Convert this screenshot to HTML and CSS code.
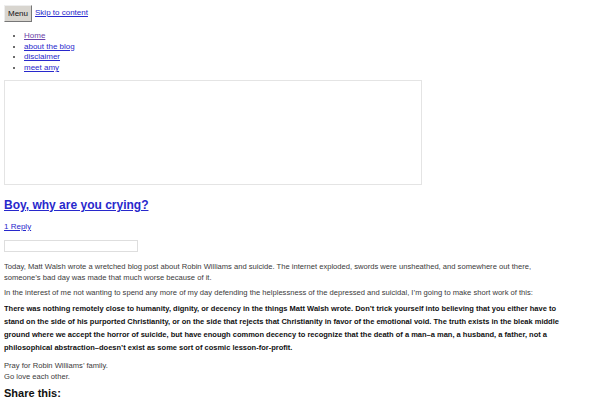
FILE: index.html
```html
<!DOCTYPE html>
<html lang="en">
<head>
    <meta charset="UTF-8">
    <meta name="viewport" content="width=device-width, initial-scale=1.0">
    <title>Boy, why are you crying?</title>
    <link rel="stylesheet" href="styles.css">
</head>
<body>
    <header class="site-header">
        <div class="header-bar">
            <button class="menu-toggle">Menu</button>
            <a href="#content" class="skip-link">Skip to content</a>
        </div>
        <ul class="nav-menu">
            <li><a href="#" class="visited">Home</a></li>
            <li><a href="#">about the blog</a></li>
            <li><a href="#">disclaimer</a></li>
            <li><a href="#">meet amy</a></li>
        </ul>
    </header>

    <div class="header-image"></div>

    <article class="post" id="content">
        <h1 class="entry-title"><a href="#">Boy, why are you crying?</a></h1>
        <div class="comments-link"><a href="#">1 Reply</a></div>
        <div class="meta-box"></div>

        <div class="entry-content">
            <p>Today, Matt Walsh wrote a wretched blog post about Robin Williams and suicide. The internet exploded, swords were unsheathed, and somewhere out there, someone’s bad day was made that much worse because of it.</p>
            <p>In the interest of me not wanting to spend any more of my day defending the helplessness of the depressed and suicidal, I’m going to make short work of this:</p>
            <p class="strong">There was nothing remotely close to humanity, dignity, or decency in the things Matt Walsh wrote. Don’t trick yourself into believing that you either have to stand on the side of his purported Christianity, or on the side that rejects that Christianity in favor of the emotional void. The truth exists in the bleak middle ground where we accept the horror of suicide, but have enough common decency to recognize that the death of a man–a man, a husband, a father, not a philosophical abstraction–doesn’t exist as some sort of cosmic lesson-for-profit.</p>
            <p>Pray for Robin Williams’ family.<br>Go love each other.</p>
        </div>

        <h3 class="share-title">Share this:</h3>
    </article>
</body>
</html>
```

FILE: styles.css
```css
* {
    box-sizing: border-box;
}

body {
    margin: 5px 4px 0;
    font-family: 'Liberation Sans', Arial, sans-serif;
    font-size: 8px;
    line-height: 10.67px;
    color: #3a3a3a;
    background: #fff;
}

a {
    color: #2828cc;
}

a.visited {
    color: #6a3fa8;
}

.header-bar {
    display: flex;
    align-items: center;
    gap: 3px;
}

.menu-toggle {
    height: 17px;
    padding: 0 3px;
    font-family: 'Liberation Sans', Arial, sans-serif;
    font-size: 8px;
    color: #111;
    background: #d8d5cf;
    border: 1px solid;
    border-color: #eee #777 #777 #eee;
}

.skip-link {
    font-size: 8px;
}

.nav-menu {
    margin: 9px 0 6px;
    padding-left: 20px;
}

.header-image {
    width: 418px;
    height: 105px;
    border: 1px solid #e4e4e4;
}

.entry-title {
    margin: 13px 0 0;
    font-size: 12px;
    line-height: 14px;
}

.comments-link {
    margin-top: 10px;
}

.meta-box {
    width: 134px;
    height: 12px;
    margin-top: 8px;
    border: 1px solid #dedede;
}

.entry-content {
    width: 560px;
    margin-top: 10px;
    font-size: 7.6px;
}

.entry-content p {
    margin: 0 0 4px;
}

.entry-content p.strong {
    margin: 3px 0 7px;
    font-size: 7.5px;
    font-weight: bold;
    line-height: 13px;
    color: #111;
}

.share-title {
    margin: 4px 0 0;
    font-size: 11px;
    line-height: 12px;
    color: #111;
}
```
